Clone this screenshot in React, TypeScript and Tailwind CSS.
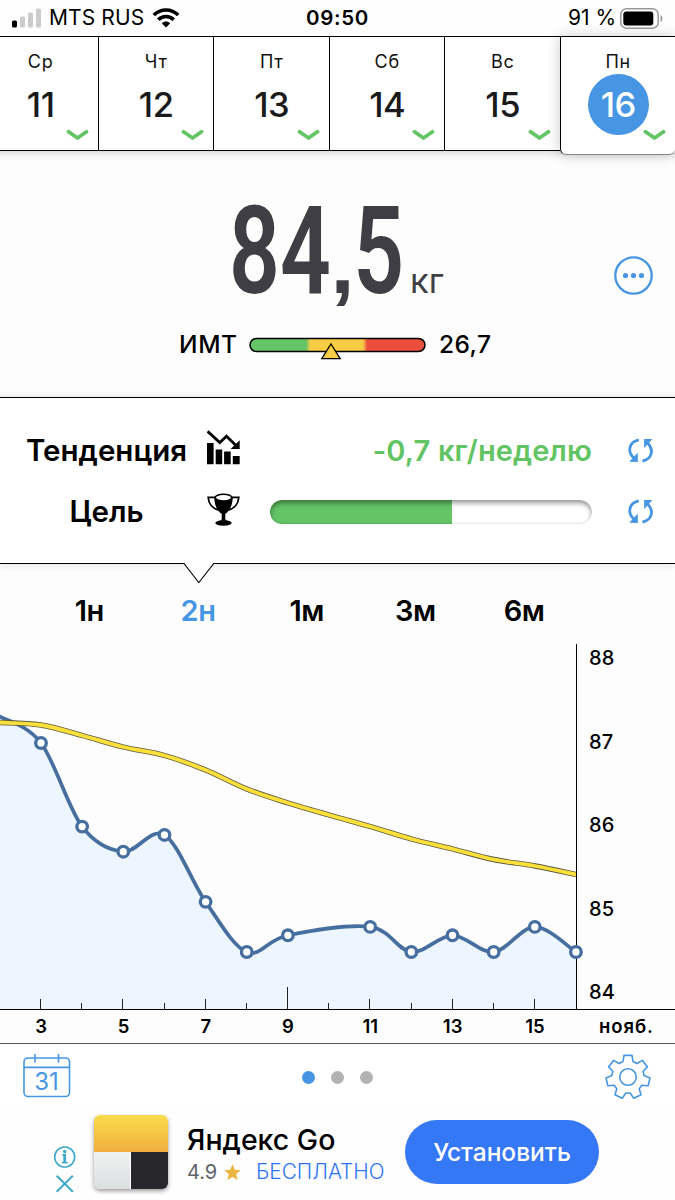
import React from 'react';
import clsx from 'clsx';

type Point = [number, number];

const days = [
  { name: 'Ср', date: 11 },
  { name: 'Чт', date: 12 },
  { name: 'Пт', date: 13 },
  { name: 'Сб', date: 14 },
  { name: 'Вс', date: 15 },
  { name: 'Пн', date: 16, active: true },
];

const ranges = ['1н', '2н', '1м', '3м', '6м'];

// Smooth curve through all points (Catmull-Rom converted to beziers)
function smoothPath(points: Point[]) {
  let d = `M${points[0][0]} ${points[0][1]}`;
  for (let i = 0; i < points.length - 1; i++) {
    const p0 = points[i - 1] ?? points[i];
    const p1 = points[i];
    const p2 = points[i + 1];
    const p3 = points[i + 2] ?? p2;
    d += `C${p1[0] + (p2[0] - p0[0]) / 6} ${p1[1] + (p2[1] - p0[1]) / 6} ${p2[0] - (p3[0] - p1[0]) / 6} ${p2[1] - (p3[1] - p1[1]) / 6} ${p2[0]} ${p2[1]}`;
  }
  return d;
}

function StatusBar() {
  return (
    <div className="grid h-9 shrink-0 grid-cols-3 items-center bg-[#fefefe]">
      <div className="flex items-center pl-3">
        <svg width="30" height="20" viewBox="0 0 30 20">
          <rect x="0" y="12.5" width="5" height="7" rx="1.5" fill="#000" />
          <rect x="8" y="8.5" width="5" height="11" rx="1.5" fill="#cbcbcb" />
          <rect x="16" y="4.5" width="5" height="15" rx="1.5" fill="#cbcbcb" />
          <rect x="24" y="0.5" width="5" height="19" rx="1.5" fill="#cbcbcb" />
        </svg>
        <span className="ml-[7px] whitespace-nowrap text-[21px] leading-9 tracking-[0.1px]">MTS RUS</span>
        <svg className="ml-2" width="28" height="20" viewBox="0 0 28 20" fill="none" stroke="#000" strokeWidth="3.6">
          <path d="M1.8 7.1C8.6 0.3 19.4 0.3 26.2 7.1" />
          <path d="M6.3 11.7C10.6 7.4 17.4 7.4 21.7 11.7" />
          <path d="M9.8 15.2C12.2 12.9 15.8 12.9 18.2 15.2L14 19.4Z" fill="#000" stroke="none" />
        </svg>
      </div>
      <span className="text-center text-[20.5px] font-semibold leading-9 tracking-[0.7px]">09:50</span>
      <div className="flex items-center justify-end pr-3">
        <span className="mr-1 whitespace-nowrap text-[21px] leading-9">91 %</span>
        <svg width="43" height="21" viewBox="0 0 43 21">
          <rect x="0.8" y="0.8" width="37.4" height="19.4" rx="5.5" fill="none" stroke="#999" strokeWidth="1.5" />
          <rect x="3.3" y="3.5" width="30" height="14" rx="3" fill="#000" />
          <path d="M40.5 7v7q2-1 2-3.5T40.5 7Z" fill="#999" />
        </svg>
      </div>
    </div>
  );
}

function DayStrip() {
  return (
    <div className="z-10 ml-[-17.6px] flex h-[115px] w-[693px] shrink-0 border-t border-black">
      {days.map((day) => (
        <div
          key={day.date}
          className={clsx(
            'relative flex flex-1 flex-col items-center border-l bg-white',
            day.active
              ? 'h-[118px] rounded-b-md border-b border-l-black border-b-[#888] shadow-[0_0_14px_rgba(0,0,0,0.22)]'
              : 'border-b border-black',
          )}
        >
          <span className="mt-[11px] text-[18px] leading-7 tracking-[0.7px] text-[#111]">{day.name}</span>
          <span
            className={clsx(
              'mt-[-2px] flex h-[61px] w-[61px] items-center justify-center rounded-full text-[34.5px] font-medium tracking-[-0.5px]',
              day.active ? 'bg-[#4796e3] text-white' : 'text-[#1a1a1a]',
            )}
          >
            {day.date}
          </span>
          <svg className={clsx('absolute right-[9px]', day.active ? 'bottom-3' : 'bottom-2')} width="23" height="13" viewBox="0 0 23 13">
            <path d="M2.5 2.8L11.5 9L20.5 2.8" fill="none" stroke="#62c462" strokeWidth="3.7" strokeLinecap="round" strokeLinejoin="round" />
          </svg>
        </div>
      ))}
    </div>
  );
}

function WeightPanel() {
  return (
    <div className="relative flex h-[246px] shrink-0 flex-col items-center bg-[#fdfdfd] shadow-[inset_0_9px_10px_-8px_rgba(0,0,0,0.2),inset_0_-6px_6px_-6px_rgba(0,0,0,0.12)]">
      <div className="flex h-[164px] w-full items-baseline pl-[229px] pt-2 text-[#3f3e45]">
        <div className="w-[178px]">
          <span className="inline-block origin-left scale-x-[0.725] whitespace-nowrap font-['Roboto'] text-[123px] font-semibold leading-[184px]">
            84<span className="inline-block w-[31px] scale-x-[1.4] text-center font-['Liberation_Sans'] text-[85px] font-bold leading-none">,</span>5
          </span>
        </div>
        <span className="ml-[3px] text-[34.5px] leading-none">кг</span>
      </div>
      <div className="flex h-[58px] w-full items-center pl-[179px] text-[24.5px] font-medium text-black">
        <span className="w-[70px] tracking-[0.6px]">ИМТ</span>
        <svg className="overflow-visible" width="177" height="26" viewBox="0 0 177 26">
          <defs>
            <linearGradient id="bmi">
              <stop offset="0.32" stopColor="#64c466" />
              <stop offset="0.345" stopColor="#f7cd45" />
              <stop offset="0.645" stopColor="#f7cd45" />
              <stop offset="0.67" stopColor="#eb4e3d" />
            </linearGradient>
          </defs>
          <rect x="1" y="7.5" width="175" height="13" rx="6.5" fill="url(#bmi)" stroke="#000" strokeWidth="1.5" />
          <path d="M82 13L91.2 27.6H72.8Z" fill="#f7cd45" stroke="#000" strokeWidth="1.3" />
        </svg>
        <span className="ml-[13px] tracking-[0.4px]">26,7</span>
      </div>
      <svg className="absolute right-[22px] top-[105px]" width="39" height="39" viewBox="0 0 39 39" fill="#4796e3">
        <circle cx="19.5" cy="19.5" r="18.2" fill="none" stroke="#4796e3" strokeWidth="2.3" />
        <circle cx="11.5" cy="19.5" r="2.6" />
        <circle cx="19.5" cy="19.5" r="2.6" />
        <circle cx="27.5" cy="19.5" r="2.6" />
      </svg>
    </div>
  );
}

function SyncIcon() {
  return (
    <svg width="26" height="25" viewBox="0 0 26 25" fill="#4796e3">
      <path d="M10.8 1.9C0.6 4.2-0.8 13.8 5.8 20" fill="none" stroke="#4796e3" strokeWidth="2.8" />
      <path d="M1.2 23.8L9.8 23.9V14.8L7.1 17.6Z" />
      <path d="M14.4 23.1C24.6 20.8 26 11.2 19.6 5" fill="none" stroke="#4796e3" strokeWidth="2.8" />
      <path d="M24.4 1.1L16.1 1V10.2L18.6 7.5Z" />
    </svg>
  );
}

function TrendIcon() {
  return (
    <svg className="mb-[6px]" width="34" height="35" viewBox="0 0 34 35">
      <path d="M0 13h6.6v21.3H0zM8.7 19.5h6.5v14.8H8.7zM17.1 21.5h6.6v12.8h-6.6zM25.8 26h6.9v8.3h-6.9z" />
      <path d="M0.6 1.3L12.8 12.6L19.5 6.3L29 15.5" fill="none" stroke="#000" strokeWidth="2.8" />
      <path d="M32.7 10.3V19H23.6Z" />
    </svg>
  );
}

function TrophyIcon() {
  return (
    <svg className="mb-1" width="34" height="34" viewBox="0 0 34 34">
      <path d="M8 4.3H1.2C1.5 10 5 15.4 11.7 17M25 4.3H31.8C31.5 10 28 15.4 21.3 17" fill="none" stroke="#000" strokeWidth="1.8" />
      <path d="M7.2 4C7.4 11.5 9.8 18 14.7 20.8V26.5Q14 27.4 11.5 27.8H21.5Q19 27.4 18.3 26.5V20.8C23.2 18 25.6 11.5 25.8 4Z" />
      <ellipse cx="16.5" cy="4.6" rx="8.4" ry="3.4" fill="#fff" stroke="#000" strokeWidth="1.6" />
      <ellipse cx="16.5" cy="30" rx="8.2" ry="2.8" />
    </svg>
  );
}

function GoalsPanel() {
  return (
    <div className="relative z-10 h-[167px] shrink-0 border-y border-black bg-white pt-[22px] shadow-[0_3px_6px_rgba(0,0,0,0.08)]">
      <div className="flex h-[61px] items-center">
        <span className="w-[207px] pl-[6px] text-center text-[29.5px] font-semibold">Тенденция</span>
        <TrendIcon />
        <span className="w-[351px] whitespace-nowrap text-right text-[29px] font-semibold tracking-[0.15px] text-[#62c462]">-0,7 кг/неделю</span>
        <span className="ml-9"><SyncIcon /></span>
      </div>
      <div className="flex h-[61px] items-center">
        <span className="w-[207px] pl-[6px] text-center text-[29.5px] font-semibold">Цель</span>
        <TrophyIcon />
        <div className="relative ml-[29px] h-6 w-[322px] overflow-hidden rounded-full">
          <div className="h-full bg-[#64c466]" style={{ width: '56.5%' }} />
          <div className="absolute inset-0 rounded-full shadow-[inset_0_3px_5px_rgba(0,0,0,0.42),inset_0_-1px_1px_rgba(0,0,0,0.06)]" />
        </div>
        <span className="ml-9"><SyncIcon /></span>
      </div>
      {/* Pointer to the selected range */}
      <svg className="absolute left-[183px] top-[164px]" width="32" height="22" viewBox="0 0 32 22">
        <path d="M0.5 0.5L15.8 20.5L31.2 0.5Z" fill="#fff" />
        <path d="M0.7 1.2L15.8 20.7L31 1.2" fill="none" stroke="#111" strokeWidth="1.1" />
      </svg>
    </div>
  );
}

const toY = (kg: number) => 99 + (87 - kg) * 83.6;
const weights: [number, number][] = [
  [3, 87], [4, 86], [5, 85.7], [6, 85.9], [7, 85.1], [8, 84.5], [9, 84.7],
  [11, 84.8], [12, 84.5], [13, 84.7], [14, 84.5], [15, 84.8], [16, 84.5],
];
const dots: Point[] = weights.map(([day, kg]) => [41 + (day - 3) * 41.15, toY(kg)]);
const weightLine = smoothPath([[-1, 72], ...dots]);
const trendLine = smoothPath(
  [78.5, 81, 91.5, 103, 111.5, 126, 145, 159, 171, 182.5, 195, 205, 215.5, 222, 230.5].map(
    (y, i): Point => [-0.2 + i * 41.17, y],
  ),
);

function WeightChart() {
  return (
    <>
      <div className="flex h-[365px] shrink-0 bg-[#fdfdfd]">
        <svg className="overflow-visible" width="577" height="365" viewBox="0 0 577 365">
          <path d={`${weightLine}V365H0Z`} fill="#edf5fe" />
          <path d={weightLine} fill="none" stroke="#466f9f" strokeWidth="3.7" />
          <path d={trendLine} fill="none" stroke="#5f5b3c" strokeWidth="5.4" />
          <path d={trendLine} fill="none" stroke="#fbe03c" strokeWidth="3.8" />
          <path d="M576.5 0V365" stroke="#000" />
          {Array.from({ length: 13 }, (_, i) => (
            <path key={i} d={`M${Math.round(41 + i * 41.17) - 0.5} 365v-${i === 6 ? 22 : i % 2 ? 6 : 10}`} stroke="#222" />
          ))}
          {dots.map(([x, y]) => (
            <circle key={x} cx={x} cy={y} r="5.3" fill="#fff" stroke="#466f9f" strokeWidth="3.3" />
          ))}
        </svg>
        <div className="flex flex-col pl-3 text-[20px] font-medium tracking-[0.2px]">
          {[88, 87, 86, 85, 84].map((kg) => (
            <span key={kg} className="h-[83.6px] shrink-0 leading-7">{kg}</span>
          ))}
        </div>
      </div>
      <div className="flex h-[35px] shrink-0 border-b border-t border-black border-b-[#555] bg-[#fdfdfd] text-[18.5px] font-semibold leading-[33px]">
        {[3, 5, 7, 9, 11, 13, 15].map((day) => (
          <span key={day} className="w-[82.3px] shrink-0 text-center">{day}</span>
        ))}
        <span className="ml-[23px] tracking-[0.9px]">нояб.</span>
      </div>
    </>
  );
}

// Outline of a gear with seven teeth
function gearPath() {
  const pts: string[] = [];
  for (let i = 0; i < 7; i++) {
    const mid = (i * 360) / 7 - 90;
    for (const [offset, r] of [[-18, 16.2], [-10.5, 22], [10.5, 22], [18, 16.2]]) {
      const a = ((mid + offset) * Math.PI) / 180;
      pts.push(`${(23 + r * Math.cos(a)).toFixed(2)} ${(23 + r * Math.sin(a)).toFixed(2)}`);
    }
  }
  return `M${pts.join('L')}Z`;
}

function Toolbar() {
  return (
    <div className="flex h-[66px] shrink-0 items-center justify-between bg-white pl-[23px] pr-[24px]">
      <svg className="mb-[3px]" width="48" height="45" viewBox="0 0 48 45" fill="none" stroke="#4796e3" strokeWidth="1.6">
        <rect x="1" y="5" width="45.5" height="38.5" rx="4" />
        <path d="M1 14.4H46.5M12 1V9.5M35.5 1V9.5" />
        <text x="23.5" y="36.8" textAnchor="middle" fontSize="24" fill="#4796e3" stroke="none">31</text>
      </svg>
      <div className="mr-px flex gap-4">
        <span className="h-[13px] w-[13px] rounded-full bg-[#4796e3]" />
        <span className="h-[13px] w-[13px] rounded-full bg-[#b2b2b2]" />
        <span className="h-[13px] w-[13px] rounded-full bg-[#b2b2b2]" />
      </div>
      <svg width="46" height="46" viewBox="0 0 46 46" fill="none" stroke="#4796e3" strokeWidth="1.6" strokeLinejoin="round">
        <path d={gearPath()} />
        <circle cx="23" cy="23" r="8.3" />
      </svg>
    </div>
  );
}

function AdBanner() {
  return (
    <div className="flex h-[90px] shrink-0 bg-[#fefefe] pl-[53px] pt-[5px]">
      <div className="flex w-[41px] flex-col pt-[31px]">
        <svg width="23" height="48" viewBox="0 0 23 48" fill="none" stroke="#3fa9c9" strokeWidth="1.6">
          <circle cx="11.7" cy="11" r="10" />
          <path d="M9.5 9h2.6v8" strokeWidth="1.8" />
          <path d="M11.7 8.3v8.9" strokeWidth="2.8" />
          <path d="M9 16.6h5.6" strokeWidth="1.5" />
          <circle cx="11.7" cy="5.6" r="1" fill="#3fa9c9" />
          <path d="M3.7 29.8L19.8 45.7M19.8 29.8L3.7 45.7" strokeWidth="2" />
        </svg>
      </div>
      <div className="grid h-[74px] w-[74px] grid-cols-2 grid-rows-2 overflow-hidden rounded-md shadow-[0_2px_4px_rgba(0,0,0,0.4)]">
        <div className="col-span-2 bg-linear-to-b from-[#f8dc4c] to-[#f2ae3d]" />
        <div className="border-r border-white bg-linear-to-b from-[#f1f2f2] to-[#dadfe0]" />
        <div className="bg-[#28272c]" />
      </div>
      <div className="ml-[19px] w-[218px] whitespace-nowrap">
        <div className="mt-[7px] text-[28.5px] font-medium leading-9">Яндекс Go</div>
        <div className="flex items-center leading-7">
          <span className="w-[37px] text-[20px] text-[#5f6368]">4.9</span>
          <svg width="17" height="17" viewBox="0 0 17 17">
            <path d="M8.5 0.3L10.8 5.7L16.8 6.2L12.2 10.1L13.6 16L8.5 12.9L3.4 16L4.8 10.1L0.2 6.2L6.2 5.7Z" fill="#eab540" />
          </svg>
          <span className="ml-[15px] text-[20.8px] font-light text-[#2f74f6]">БЕСПЛАТНО</span>
        </div>
      </div>
      <button className="mt-[5px] h-16 w-[194px] rounded-full bg-[#3478f6] text-[24.5px] font-medium text-white">Установить</button>
    </div>
  );
}

export default function App() {
  return (
    <div className="flex h-[1200px] w-[675px] flex-col overflow-hidden bg-white font-['Inter','Liberation_Sans',sans-serif] text-black">
      <StatusBar />
      <DayStrip />
      <WeightPanel />
      <GoalsPanel />
      <div className="flex h-20 shrink-0 bg-[#fdfdfd] pl-[35px]">
        {ranges.map((range) => (
          <span
            key={range}
            className={clsx('w-[108.7px] pt-[26px] text-center text-[29px] font-semibold leading-[42px] tracking-[-0.5px]', range === '2н' && 'text-[#4796e3]')}
          >
            {range}
          </span>
        ))}
      </div>
      <WeightChart />
      <Toolbar />
      <AdBanner />
    </div>
  );
}
